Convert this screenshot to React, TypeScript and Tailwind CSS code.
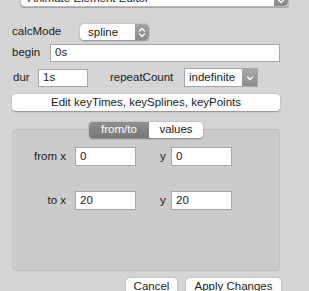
const font = { fontFamily: '"Liberation Sans", Arial, sans-serif' }

function Stepper() {
  return (
    <div className="flex h-full w-[14px] items-center justify-center rounded-r-[4px] bg-gradient-to-b from-[#a3a3a3] to-[#8a8a8a]">
      <svg width="8" height="11" viewBox="0 0 8 11" fill="none" stroke="white" strokeWidth="1.2" strokeLinecap="round" strokeLinejoin="round">
        <path d="M1.5 4 L4 1.5 L6.5 4" />
        <path d="M1.5 7 L4 9.5 L6.5 7" />
      </svg>
    </div>
  )
}

function DropArrow() {
  return (
    <div className="flex h-full w-[15px] items-center justify-center bg-gradient-to-b from-[#a8a8a8] to-[#8e8e8e]">
      <svg width="8" height="6" viewBox="0 0 8 6" fill="none" stroke="white" strokeWidth="1.2" strokeLinecap="round" strokeLinejoin="round">
        <path d="M1.5 2 L4 4.5 L6.5 2" />
      </svg>
    </div>
  )
}

function Field({ value, className }: { value: string; className: string }) {
  return (
    <div className={`flex items-center border border-[#a7a7a7] bg-white pl-[4px] text-[#1b1b1b] ${className}`}>
      {value}
    </div>
  )
}

export default function App() {
  return (
    <div className="h-[291px] w-[309px] overflow-hidden bg-[#d5d5d5] text-[11.5px] text-[#1b1b1b]" style={font}>
      <div className="ml-[20px] mt-[-10px] flex h-[17px] w-[269px] overflow-hidden rounded-[4px] border border-[#b9b9b9] bg-white shadow-[0_0.5px_1px_rgba(0,0,0,0.25)]">
        <div className="flex-1 pl-[7px] leading-[15px]">Animate Element Editor</div>
        <Stepper />
      </div>

      <div className="mt-[17px] flex h-[16px] items-center">
        <span className="ml-[12px] w-[68px]">calcMode</span>
        <div className="flex h-[16px] w-[69px] overflow-hidden rounded-[4px] bg-white shadow-[0_0.5px_1.5px_rgba(0,0,0,0.35)]">
          <div className="flex-1 pl-[8px] leading-[16px]">spline</div>
          <Stepper />
        </div>
      </div>

      <div className="mt-[4px] flex h-[18px] items-center">
        <span className="ml-[12px] w-[38px]">begin</span>
        <Field value="0s" className="h-[18px] w-[230px]" />
      </div>

      <div className="mt-[6px] flex h-[19px] items-center">
        <span className="ml-[13px] w-[25px]">dur</span>
        <Field value="1s" className="h-[18px] w-[50px]" />
        <span className="ml-[22px] w-[74px]">repeatCount</span>
        <div className="flex h-[19px] w-[74px] overflow-hidden border border-[#a7a7a7] bg-white">
          <div className="flex-1 pl-[4px] leading-[17px]">indefinite</div>
          <DropArrow />
        </div>
      </div>

      <div className="ml-[12px] mt-[7px] flex h-[17px] w-[268px] items-center justify-center rounded-[4px] bg-white shadow-[0_0.5px_1.5px_rgba(0,0,0,0.35)]">
        Edit keyTimes, keySplines, keyPoints
      </div>

      <div className="relative ml-[12px] mt-[18px] h-[142px] w-[268px] rounded-[4px] border border-[#c0c0c0] bg-[#cbcbcb]">
        <div className="absolute left-[76px] top-[-8px] flex h-[16px] w-[114px] overflow-hidden rounded-[4px] shadow-[0_0.5px_1.5px_rgba(0,0,0,0.4)]">
          <div className="flex w-[60px] items-center justify-center bg-gradient-to-b from-[#8f8f8f] to-[#777777] text-white">from/to</div>
          <div className="flex flex-1 items-center justify-center bg-white">values</div>
        </div>

        <div className="mt-[17px] flex h-[19px] items-center">
          <span className="w-[53px] text-right">from x</span>
          <Field value="0" className="ml-[9px] h-[19px] w-[61px]" />
          <span className="ml-[24px] w-[11px]">y</span>
          <Field value="0" className="h-[19px] w-[61px]" />
        </div>

        <div className="mt-[25px] flex h-[19px] items-center">
          <span className="w-[53px] text-right">to x</span>
          <Field value="20" className="ml-[9px] h-[19px] w-[61px]" />
          <span className="ml-[24px] w-[11px]">y</span>
          <Field value="20" className="h-[19px] w-[61px]" />
        </div>
      </div>

      <div className="mt-[7px] flex gap-[9px] pl-[126px]">
        <div className="flex h-[18px] w-[51px] items-center justify-center rounded-[4px] bg-white shadow-[0_0.5px_1.5px_rgba(0,0,0,0.35)]">Cancel</div>
        <div className="flex h-[18px] w-[95px] items-center justify-center rounded-[4px] bg-white shadow-[0_0.5px_1.5px_rgba(0,0,0,0.35)]">Apply Changes</div>
      </div>
    </div>
  )
}
